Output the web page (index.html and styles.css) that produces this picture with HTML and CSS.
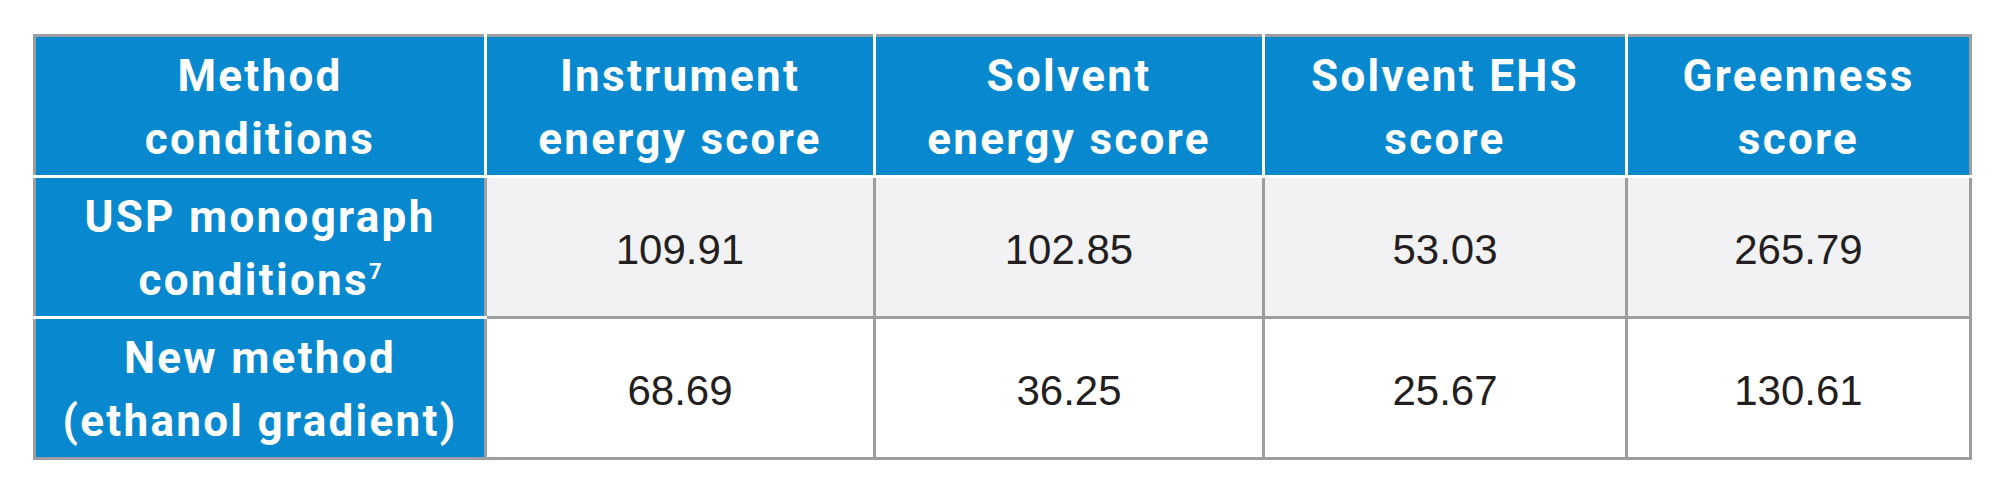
FILE: index.html
```html
<!DOCTYPE html>
<html>
<head>
<meta charset="utf-8">
<link rel="stylesheet" href="styles.css">
</head>
<body>
<table class="scores">
  <colgroup>
    <col class="c1"><col class="c2"><col class="c3"><col class="c4"><col class="c5">
  </colgroup>
  <thead>
    <tr class="head">
      <th class="lead">Method<br>conditions</th>
      <th>Instrument<br>energy score</th>
      <th>Solvent<br>energy score</th>
      <th>Solvent EHS<br>score</th>
      <th>Greenness<br>score</th>
    </tr>
  </thead>
  <tbody>
    <tr class="row alt">
      <th class="lead">USP monograph<br>conditions<sup>7</sup></th>
      <td>109.91</td>
      <td>102.85</td>
      <td>53.03</td>
      <td>265.79</td>
    </tr>
    <tr class="row last">
      <th class="lead">New method<br>(ethanol gradient)</th>
      <td>68.69</td>
      <td>36.25</td>
      <td>25.67</td>
      <td>130.61</td>
    </tr>
  </tbody>
</table>
</body>
</html>
```

FILE: styles.css
```css
html, body {
  margin: 0;
  padding: 0;
  background: #ffffff;
}
body {
  padding: 34px 0 0 33px;
}
.scores {
  border-collapse: collapse;
  table-layout: fixed;
  width: 1936px;
  border: 3px solid #9c9ea0;
}
.c1 { width: 451px; }
.c2 { width: 389px; }
.c3 { width: 389px; }
.c4 { width: 363px; }
.c5 { width: 344px; }

th, td {
  padding: 0;
  text-align: center;
  vertical-align: middle;
}
th {
  background: #0889cf;
  color: #ffffff;
  font-family: Roboto, "Liberation Sans", sans-serif;
  font-weight: 700;
  font-size: 44px;
  line-height: 63px;
  letter-spacing: 2.3px;
  padding-top: 4px;
}
.head th {
  border-left: 3px solid #ffffff;
  border-right: 3px solid #ffffff;
  border-bottom: 3px solid #ffffff;
  height: 134px;
}
.head th:first-child { border-left: 3px solid #9c9ea0; }
.head th:last-child { border-right: 3px solid #9c9ea0; }
.row { height: 141px; }
.row .lead {
  border-top: 3px solid #ffffff;
  border-bottom: 3px solid #ffffff;
  border-right: 3px solid #9c9ea0;
  border-left: 3px solid #9c9ea0;
}
.row.last .lead { border-bottom: 3px solid #9c9ea0; }
td {
  border: 3px solid #9c9ea0;
  font-family: "Liberation Sans", Arial, sans-serif;
  font-size: 42px;
  color: #231f20;
  background: #ffffff;
  padding-top: 5px;
}
.alt td { background: #f2f2f4; }
sup {
  font-size: 22px;
  line-height: 0;
  vertical-align: 16px;
  letter-spacing: 0;
}
```
